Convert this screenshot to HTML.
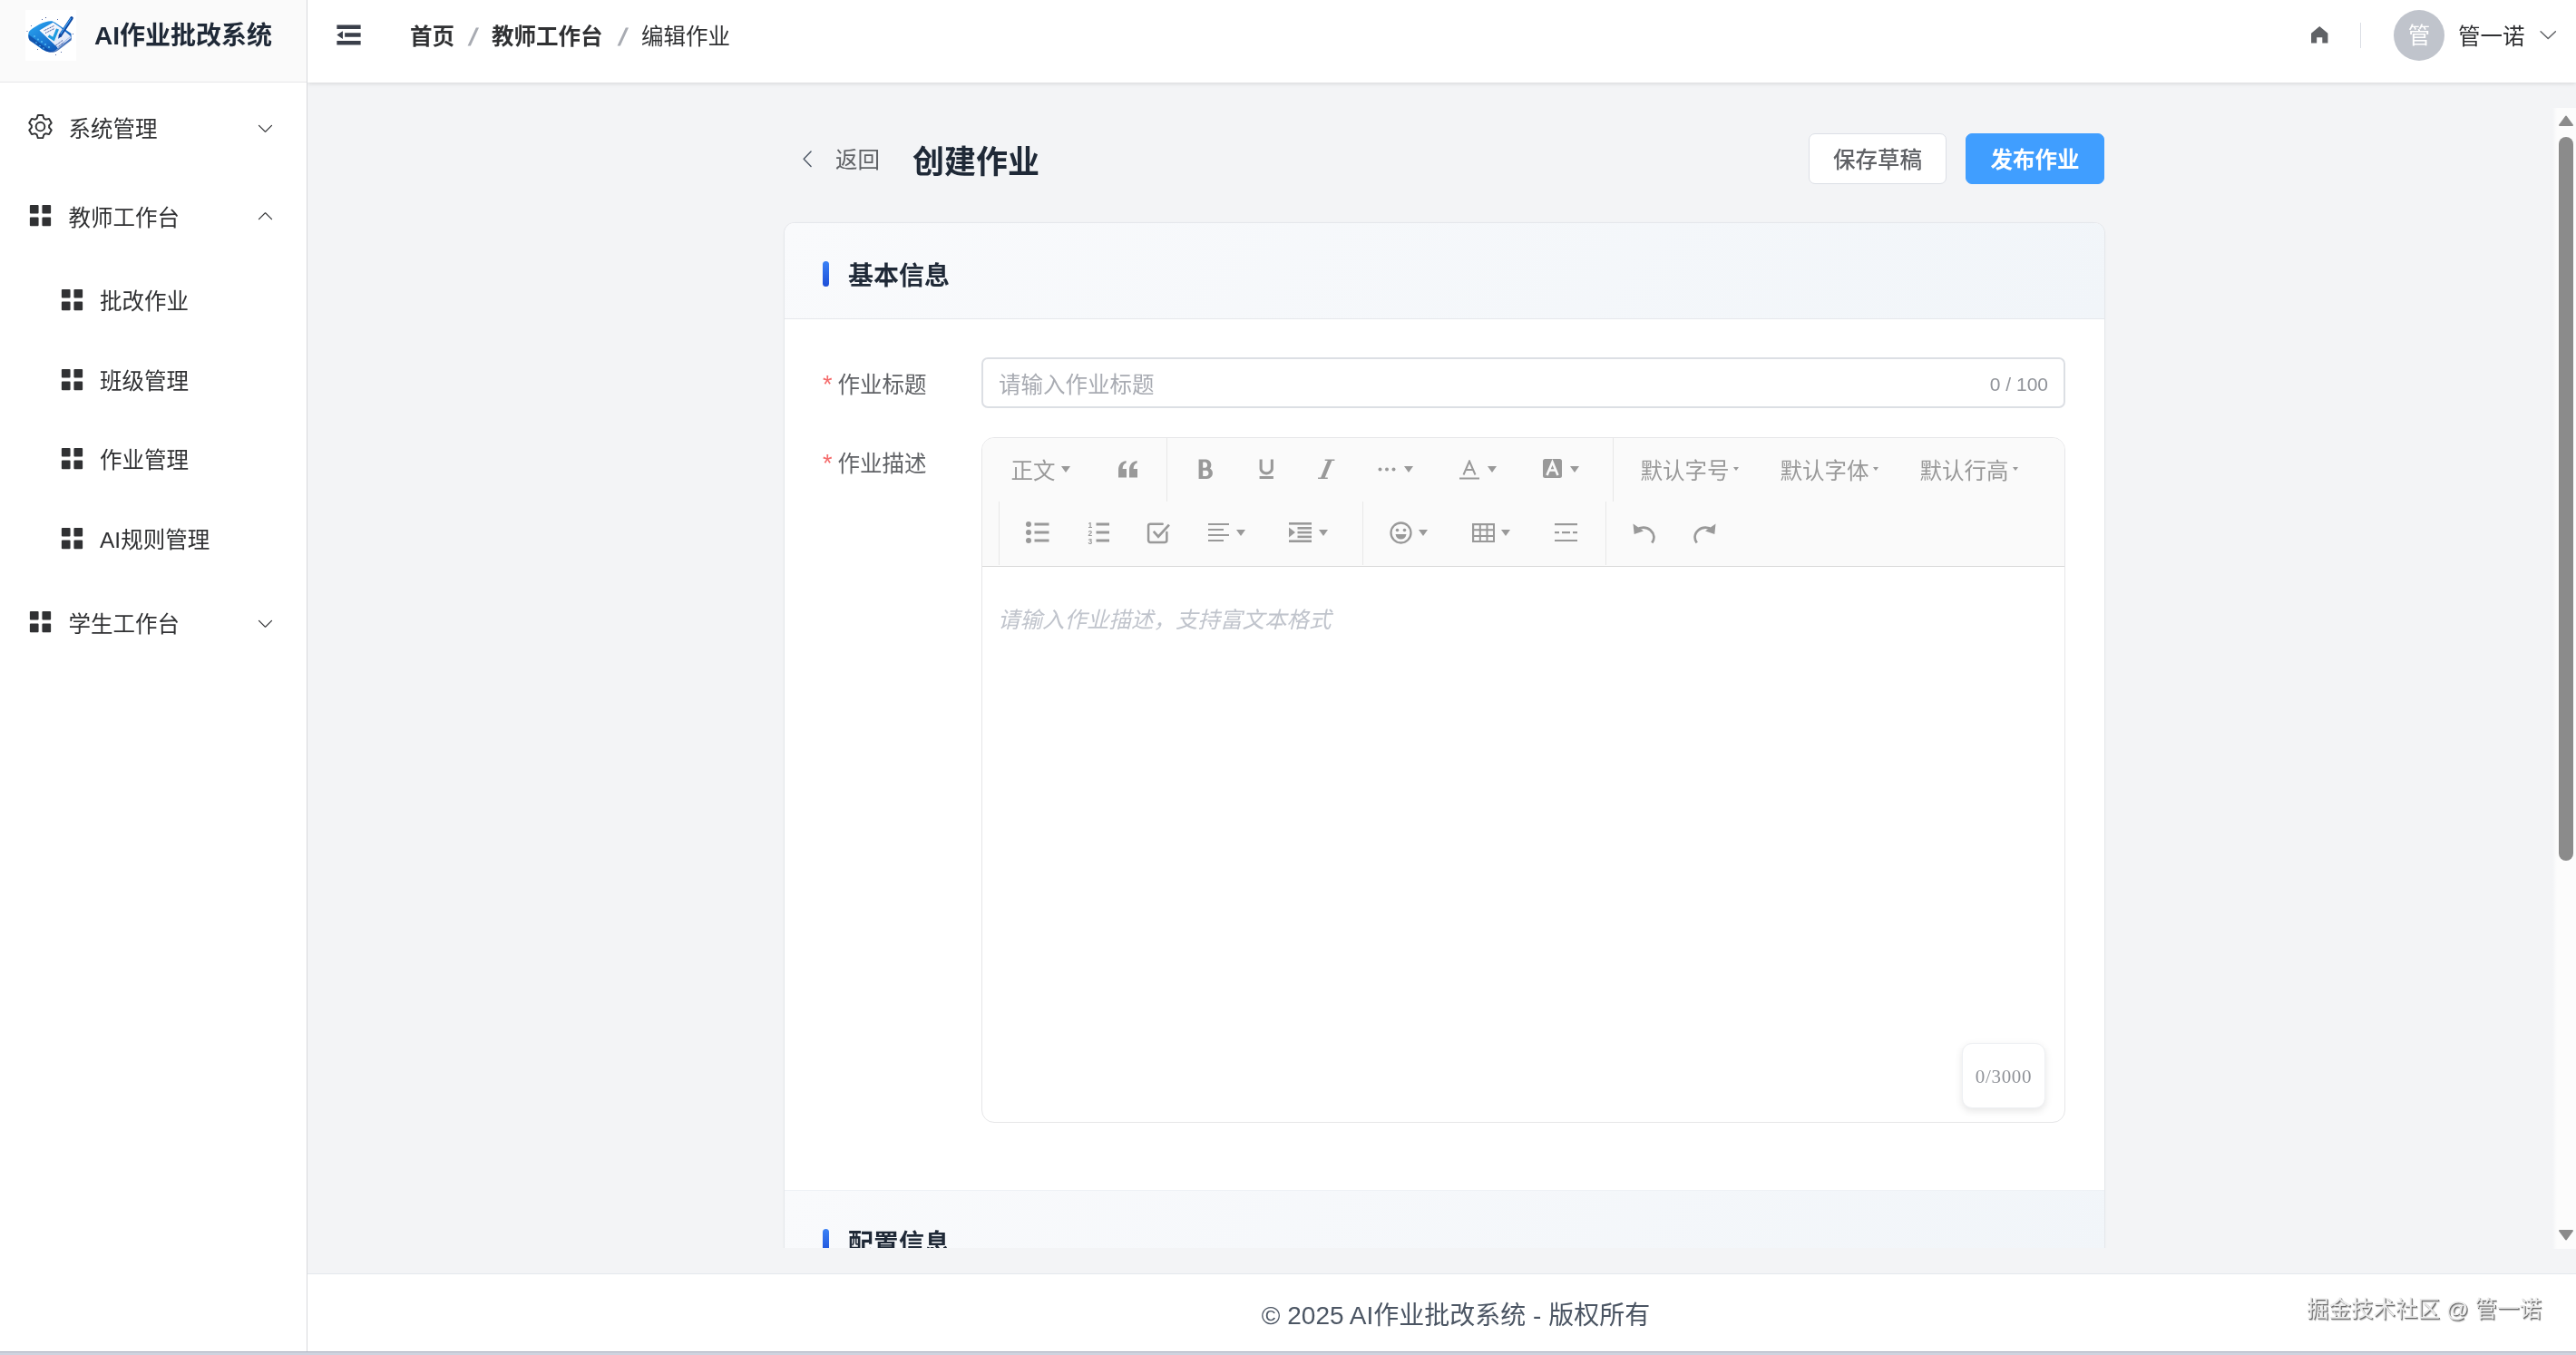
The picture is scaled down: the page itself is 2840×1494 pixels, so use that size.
<!DOCTYPE html>
<html lang="zh-CN">
<head>
<meta charset="utf-8">
<title>AI作业批改系统 - 编辑作业</title>
<style>
*{box-sizing:border-box;margin:0;padding:0}
html,body{width:2840px;height:1494px;overflow:hidden;background:#fff}
body{position:relative;will-change:transform;font-family:"Liberation Sans","Noto Sans CJK SC",sans-serif;font-size:24.5px;color:#303133;-webkit-font-smoothing:antialiased}
.abs{position:absolute}
svg{display:block}
/* sidebar */
#side{position:absolute;z-index:3;left:0;top:0;width:339px;height:1490px;background:#fff;border-right:1px solid #d8d9dc}
#brand{position:absolute;left:0;top:0;width:338px;height:91px;background:#fafafa;border-bottom:1px solid #e6e6e8}
#logo{position:absolute;left:28px;top:11px;width:56px;height:56px;background:#fff}
#brand .t{position:absolute;left:104px;top:20px;line-height:40px;font-size:28px;font-weight:700;color:#1f2937;white-space:nowrap}
.mi{position:absolute;left:0;width:338px;height:98px;color:#303133}
.mi .ic{position:absolute;left:29px;top:50%;width:31px;height:31px;margin-top:-16px}
.mi .tx{position:absolute;left:75.500px;top:50%;line-height:40px;margin-top:-17.5px;font-size:24.5px;white-space:nowrap}
.mi .ar{position:absolute;left:282px;top:50%;width:21px;height:21px;margin-top:-9px}
.mi .ar.u{margin-top:-10px}
.mi.sub{height:87.5px}
.mi.sub .ic{left:64px}
.mi.sub .tx{left:110px}
/* header */
#head{position:absolute;left:339px;top:0;width:2501px;height:91px;background:#fff;box-shadow:0 1px 5px rgba(0,0,0,.13)}
.bc{position:absolute;top:20.5px;line-height:40px;font-size:24.5px;white-space:nowrap}
.bc.b{font-weight:700;color:#303133}
.bc.s{color:#a8abb2;font-weight:700;font-size:27px;transform:skewX(-15deg)}
/* main */
#main{position:absolute;left:339px;top:90px;width:2501px;height:1314px;background:#f3f4f6}
#foot{position:absolute;left:339px;top:1404px;width:2501px;height:86px;background:#fff;border-top:1px solid #e4e7ed}
#strip{position:absolute;left:0;top:1490px;width:2840px;height:4px;background:#cfd3df;border-top:1px solid #a9aebd}

#fold{position:absolute;left:28px;top:21px;width:35px;height:35px;color:#3a3f4a}
#home{position:absolute;left:2206px;top:26px;width:24.5px;height:24.5px;color:#606266}
#hdiv{position:absolute;left:2263px;top:25px;width:1px;height:28px;background:#dcdfe6}
#ava{position:absolute;left:2300px;top:11px;width:56px;height:56px;border-radius:50%;background:#c0c4cc;color:#fff;text-align:center;line-height:58px;font-size:24.5px}
#uname{position:absolute;left:2371px;top:20.5px;line-height:40px;font-size:24.5px;color:#303133;white-space:nowrap}
#uarr{position:absolute;left:2458px;top:26px;width:24.5px;height:24.5px;color:#606266}
/* page */
#back{position:absolute;left:880px;top:157px;line-height:40px;color:#606266;font-size:24.5px;white-space:nowrap}
#backi{position:absolute;left:879px;top:163.2px;width:24.5px;height:24.5px;color:#4b5563}
#ptitle{position:absolute;left:1006px;top:153.5px;line-height:50px;font-size:35px;font-weight:700;color:#1f2937;white-space:nowrap}
.btn{position:absolute;top:147px;height:56px;border-radius:7px;font-size:24.5px;line-height:58px;text-align:center;white-space:nowrap}
#bsave{left:1994px;width:152px;background:#fff;border:1px solid #dcdfe6;color:#606266;font-weight:500}
#bpub{left:2167px;width:153px;background:#409eff;border:1px solid #409eff;color:#fff;font-weight:700}
#clip{position:absolute;left:339px;top:119px;width:2475px;height:1257px;overflow:hidden}
#card{position:absolute;left:526px;top:127px;width:1455px;height:1400px;background:#fff;border-radius:11px;box-shadow:0 0 0 1px #e5e7eb,0 1px 4px rgba(0,0,0,.03);overflow:hidden}
.sh{position:absolute;left:0;width:1455px;height:106px;background:linear-gradient(135deg,#f9fafc 0%,#f1f5f9 100%);border-bottom:1px solid #e5e7eb}
.sh .bar{position:absolute;left:42px;top:42px;width:7px;height:28px;border-radius:4px;background:linear-gradient(180deg,#3b82f6,#1d4ed8)}
.sh .tt{position:absolute;left:70px;top:39px;line-height:40px;font-size:28px;font-weight:700;color:#1f2937;white-space:nowrap}
.lab{position:absolute;left:42px;line-height:40px;font-size:24.5px;color:#606266;white-space:nowrap}
.lab i{font-style:normal;color:#f56c6c;margin-right:6px;font-size:27px;position:relative;top:0px;line-height:30px}
#inp{position:absolute;left:217px;top:148px;width:1195px;height:56px;border:2px solid #dcdfe4;border-radius:7px;background:#fff}
#inp .ph{position:absolute;left:17px;top:8.5px;line-height:40px;color:#a8abb2;font-size:24.5px;white-space:nowrap}
#inp .ct{position:absolute;right:17px;top:8px;line-height:40px;color:#909399;font-size:21px;white-space:nowrap}
#ed{position:absolute;left:217px;top:236px;width:1195px;height:756px;border:1px solid #e6e6e8;border-radius:14px;background:#fff;overflow:hidden}
#tb{position:absolute;left:0;top:0;width:1193px;height:142px;background:#fafafa;border-bottom:1px solid #d9d9d9;color:#999}
.tdv{position:absolute;width:1px;height:70px;background:#e8e8e8}
.ti{position:absolute;width:25px;height:25px}
.tt2{position:absolute;line-height:40px;font-size:24.5px;color:#999;white-space:nowrap}
.ca{position:absolute;width:0;height:0;border-left:5px solid transparent;border-right:5px solid transparent;border-top:7px solid #999}
.ca.s{border-left-width:3px;border-right-width:3px;border-top-width:4px}
#edph{position:absolute;left:17px;top:181px;line-height:40px;font-size:24.5px;font-style:italic;color:#c0c4cc;white-space:nowrap}
#cnt{position:absolute;left:1080px;top:667px;width:92px;height:72px;border-radius:11px;background:#fff;border:1px solid #eef0f3;box-shadow:0 3px 9px rgba(0,0,0,.10);text-align:center;line-height:72px;font-family:"Liberation Serif","Noto Serif CJK SC",serif;font-size:21px;letter-spacing:.7px;color:#909399}
/* scrollbar */
#sb{position:absolute;left:2814px;top:119px;width:26px;height:1258px;background:linear-gradient(90deg,rgba(252,252,252,0) 0,#fcfcfc 5px)}
#sb .up{position:absolute;left:6px;top:7px}
#sb .dn{position:absolute;left:6px;top:1236px}
#sb .th{position:absolute;left:7px;top:32px;width:16px;height:798px;border-radius:8px;background:#8b8b8b}
#ftx{position:absolute;left:0;top:23.5px;width:2532px;text-align:center;line-height:44px;font-size:28px;color:#4b5563;white-space:nowrap}
#wm{position:absolute;left:2543px;top:1424px;line-height:40px;font-size:24.5px;color:#ebebeb;white-space:nowrap;text-shadow:1px 1px 0 #6a6a6a,1.5px 1.5px 1px rgba(0,0,0,.3)}
</style>
</head>
<body>
<div id="main"></div>
<div id="clip">
  <div id="card">
    <div class="sh" style="top:0"><div class="bar"></div><div class="tt">基本信息</div></div>
    <div class="lab" style="top:158.5px"><i>*</i>作业标题</div>
    <div id="inp"><div class="ph">请输入作业标题</div><div class="ct">0 / 100</div></div>
    <div class="lab" style="top:246px"><i>*</i>作业描述</div>
    <div id="ed">
      <div id="tb">
<div class="tt2" style="left:31.5px;top:16.5px">正文</div>
<div class="ca" style="left:87.0px;top:30.5px"></div>
<svg class="abs" style="left:148.8px;top:23.0px" width="23" height="22" viewBox="0 0 23 22" ><path fill="#999" d="M1 12.5C1 6.5 4 2.8 9.6 2v2.6C7 5.4 5.8 7.6 5.6 11H10v9.5H1zM13 12.5C13 6.5 16 2.8 21.6 2v2.6C19 5.4 17.8 7.6 17.6 11H22v9.5h-9z"/></svg>
<div class="tdv" style="left:203.0px;top:0.0px"></div>
<svg class="abs" style="left:233.8px;top:22.4px" width="24.5" height="24.5" viewBox="0 0 1024 1024" ><path fill="#999" d="M707.872 484.64A254.88 254.88 0 0 0 768 320c0-141.152-114.848-256-256-256H192v896h384c141.152 0 256-114.848 256-256a256.096 256.096 0 0 0-124.128-219.36zM384 192h101.504c55.968 0 101.504 57.408 101.504 128s-45.536 128-101.504 128H384V192z m159.008 640H384v-256h159.008c58.464 0 106.016 57.408 106.016 128s-47.552 128-106.016 128z"/></svg>
<svg class="abs" style="left:300.8px;top:22.4px" width="24.5" height="24.5" viewBox="0 0 1024 1024" ><path fill="#999" d="M704 64l128 0 0 416c0 159.072-143.264 288-320 288s-320-128.928-320-288l0-416 128 0 0 416c0 40.16 18.24 78.688 51.36 108.512 36.896 33.216 86.848 51.488 140.64 51.488s103.744-18.304 140.64-51.488c33.12-29.792 51.36-68.352 51.36-108.512l0-416zM192 832l640 0 0 128-640 0z"/></svg>
<svg class="abs" style="left:366.8px;top:22.4px" width="24.5" height="24.5" viewBox="0 0 1024 1024" ><path fill="#999" d="M896 64v64h-128L448 896h128v64H128v-64h128L576 128h-128V64z"/></svg>
<svg class="abs" style="left:435.5px;top:32.0px" width="20" height="5" viewBox="0 0 20 5" ><circle cx="2.5" cy="2.5" r="2" fill="#999"/><circle cx="10" cy="2.5" r="2" fill="#999"/><circle cx="17.5" cy="2.5" r="2" fill="#999"/></svg>
<div class="ca" style="left:465.0px;top:30.5px"></div>
<svg class="abs" style="left:526.0px;top:23.5px" width="22" height="22" viewBox="0 0 22 22" ><path fill="none" stroke="#999" stroke-width="2" d="M4.5 16.5L11 1.5l6.5 15M7 11h8M0 20.5h22"/></svg>
<div class="ca" style="left:556.5px;top:30.5px"></div>
<svg class="abs" style="left:617.8px;top:23.3px" width="21" height="21" viewBox="0 0 21 21" ><rect x="0" y="0" width="21" height="21" rx="2.5" fill="#999"/><path fill="none" stroke="#fafafa" stroke-width="2.6" d="M4.5 18L10.5 3.5l6 14.5M6.8 12.5h7.4"/></svg>
<div class="ca" style="left:647.5px;top:30.5px"></div>
<div class="tdv" style="left:694.5px;top:0.0px"></div>
<div class="tt2" style="left:725.5px;top:16.5px">默认字号</div>
<div class="ca s" style="left:828.0px;top:31.5px"></div>
<div class="tt2" style="left:879.5px;top:16.5px">默认字体</div>
<div class="ca s" style="left:982.0px;top:31.5px"></div>
<div class="tt2" style="left:1033.5px;top:16.5px">默认行高</div>
<div class="ca s" style="left:1136.0px;top:31.5px"></div>
<div class="tdv" style="left:17.5px;top:70.0px"></div>
<svg class="abs" style="left:48.0px;top:92.3px" width="25.5" height="24" viewBox="0 0 25.5 24" ><circle cx="3" cy="3" r="3" fill="#999"/><rect x="9.5" y="1.5" width="16" height="3" fill="#999"/><circle cx="3" cy="12" r="3" fill="#999"/><rect x="9.5" y="10.5" width="16" height="3" fill="#999"/><circle cx="3" cy="21" r="3" fill="#999"/><rect x="9.5" y="19.5" width="16" height="3" fill="#999"/></svg>
<svg class="abs" style="left:115.8px;top:92.3px" width="24.5" height="25" viewBox="0 0 24.5 25" ><rect x="9.5" y="1.5" width="15" height="3" fill="#999"/><rect x="9.5" y="10.5" width="15" height="3" fill="#999"/><rect x="9.5" y="19.5" width="15" height="3" fill="#999"/><g font-family="Liberation Sans,sans-serif" font-size="8.5" font-weight="700" fill="#999"><text x="0.5" y="6.5">1</text><text x="0.5" y="15.5">2</text><text x="0.5" y="24.5">3</text></g></svg>
<svg class="abs" style="left:181.0px;top:90.6px" width="26.5" height="26" viewBox="0 0 25.5 25" ><path fill="none" stroke="#999" stroke-width="2.4" stroke-linejoin="round" stroke-linecap="round" d="M21.5 12.5V21a2 2 0 0 1-2 2H4a2 2 0 0 1-2-2V5.5a2 2 0 0 1 2-2h13"/><path fill="none" stroke="#999" stroke-width="2.6" d="M7.5 11.5l5 5.5L24 4.5"/></svg>
<svg class="abs" style="left:248.7px;top:94.0px" width="23" height="20" viewBox="0 0 23 20" ><rect x="0" y="0" width="23" height="2" fill="#999"/><rect x="0" y="6" width="17" height="2" fill="#999"/><rect x="0" y="12" width="23" height="2" fill="#999"/><rect x="0" y="18" width="17" height="2" fill="#999"/></svg>
<div class="ca" style="left:280.0px;top:101.0px"></div>
<svg class="abs" style="left:338.3px;top:93.0px" width="25" height="22" viewBox="0 0 25 22" ><rect x="0" y="0" width="25" height="2.6" fill="#999"/><rect x="9.5" y="5" width="15.5" height="2.6" fill="#999"/><rect x="9.5" y="9.8" width="15.5" height="2.6" fill="#999"/><rect x="9.5" y="14.6" width="15.5" height="2.6" fill="#999"/><rect x="0" y="19.4" width="25" height="2.6" fill="#999"/><path fill="#999" d="M0 5.5l7 5.5-7 5.5z"/></svg>
<div class="ca" style="left:371.0px;top:101.0px"></div>
<div class="tdv" style="left:418.5px;top:70.0px"></div>
<svg class="abs" style="left:448.8px;top:91.5px" width="25" height="25" viewBox="0 0 25 25" ><circle cx="12.5" cy="12.5" r="11" fill="none" stroke="#999" stroke-width="2.3"/><circle cx="8.5" cy="9.5" r="1.8" fill="#999"/><circle cx="16.5" cy="9.5" r="1.8" fill="#999"/><path fill="#999" d="M6.5 14h12c-.6 3.6-3 5.6-6 5.6s-5.400-2-6-5.600z"/></svg>
<div class="ca" style="left:481.0px;top:101.0px"></div>
<svg class="abs" style="left:539.6px;top:93.7px" width="25.2" height="21.2" viewBox="0 0 25.2 21.2" ><rect x="1.1" y="1.1" width="23" height="19" fill="none" stroke="#999" stroke-width="2.2"/><path stroke="#999" stroke-width="2" fill="none" d="M1 7.300h23M1 14h23M8.800 1v19M16.500 1v19"/></svg>
<div class="ca" style="left:572.0px;top:101.0px"></div>
<svg class="abs" style="left:630.8px;top:93.9px" width="25" height="20.2" viewBox="0 0 25 20.2" ><rect x="0" y="0" width="25" height="2.2" fill="#999"/><rect x="0" y="18" width="25" height="2.2" fill="#999"/><rect x="0" y="9" width="5" height="2.200" fill="#999"/><rect x="8" y="9" width="9" height="2.2" fill="#999"/><rect x="20" y="9" width="5" height="2.2" fill="#999"/></svg>
<div class="tdv" style="left:686.5px;top:70.0px"></div>
<svg class="abs" style="left:716.5px;top:92.5px" width="25" height="24" viewBox="0 0 25 24" ><path fill="none" stroke="#999" stroke-width="2.8" d="M4 8.500C8.500 4.800 15 4.500 19.500 8.500s5 9.500 1.800 14"/><path fill="#999" d="M0.500 1.500l1.200 11.500 10.300-3.500z"/></svg>
<svg class="abs" style="left:783.5px;top:92.5px" width="25" height="24" viewBox="0 0 25 24" ><g transform="translate(25,0) scale(-1,1)"><path fill="none" stroke="#999" stroke-width="2.8" d="M4 8.500C8.500 4.800 15 4.500 19.500 8.500s5 9.500 1.800 14"/><path fill="#999" d="M0.500 1.500l1.200 11.500 10.300-3.500z"/></g></svg>
</div><!--/TB-->
      <div id="edph">请输入作业描述，支持富文本格式</div>
      <div id="cnt">0/3000</div>
    </div>
    <div class="sh" style="top:1066px;border-top:1px solid #eef1f5"><div class="bar"></div><div class="tt">配置信息</div></div>
  </div>
</div>
<div id="backi"><svg viewBox="0 0 1024 1024" width="100%" height="100%"><path fill="currentColor" d="M609.408 149.376 277.76 489.6a32 32 0 0 0 0 44.672l331.648 340.352a29.12 29.12 0 0 0 41.728 0 30.592 30.592 0 0 0 0-42.752L339.264 511.936l311.872-319.872a30.592 30.592 0 0 0 0-42.688 29.12 29.12 0 0 0-41.728 0z"/></svg></div>
<div id="back" style="left:921px">返回</div>
<div id="ptitle">创建作业</div>
<div class="btn" id="bsave">保存草稿</div>
<div class="btn" id="bpub">发布作业</div>
<div id="sb"><svg class="up" width="18" height="14" viewBox="0 0 18 14"><path d="M9 2.500L16 12H2z" fill="#8b8b8b" stroke="#8b8b8b" stroke-width="2" stroke-linejoin="round"/></svg><div class="th"></div><svg class="dn" width="18" height="14" viewBox="0 0 18 14"><path d="M9 11.500L16 2H2z" fill="#8b8b8b" stroke="#8b8b8b" stroke-width="2" stroke-linejoin="round"/></svg></div>
<div id="side">
  <div id="brand">
    <div id="logo"><svg width="56" height="56" viewBox="8 7 56 56">
<defs><linearGradient id="lg1" x1="0" y1="0" x2="1" y2="1"><stop offset="0" stop-color="#2aa8f2"/><stop offset=".55" stop-color="#1976d2"/><stop offset="1" stop-color="#0b3fa0"/></linearGradient>
<linearGradient id="lg2" x1="0" y1="0" x2="1" y2="1"><stop offset="0" stop-color="#ffffff"/><stop offset="1" stop-color="#d9e2f7"/></linearGradient></defs>
<path fill="url(#lg1)" d="M11.5 32.500C12 30 15 27.500 23.500 22.800C29 20 34 18.800 37.500 19.300L41 21 58.500 33 58.700 38.500 43.500 50 C39 53.500 34.500 54 30.500 52.500L26.500 50.500 13 40.500C11.200 38.500 11 35 11.500 32.500z"/>
<path fill="#0d47a1" d="M11.500 34l22 16.500c3 2 6 2 9 .5L58.700 38v2.200L44 51.500c-4 3-9 3-13 .8L13 41c-1.500-1.500-1.800-4-1.500-7z" opacity=".75"/>
<path fill="url(#lg2)" d="M23.500 29.500L38.500 20.800l8 5.500 11.500 9.700L43 48z"/>
<path fill="#cfd9f3" d="M43 48L58 36l.3 2L43.500 49.500z"/>
<path fill="none" stroke="#1e3a8a" stroke-width=".9" stroke-dasharray="1.200 .6" d="M28.500 29.800l11.500-5.600M30 32.500l10-5M49 40.500l-8 6M50.500 43l-6 4.500"/>
<path fill="none" stroke="#1e9be0" stroke-width="3.200" stroke-linejoin="miter" d="M33.500 35.500l5.500 3.500 4.500-11"/>
<path fill="none" stroke="#0d47a1" stroke-width="3.600" stroke-linecap="round" d="M59 16L46.500 35"/>
<path fill="none" stroke="#42a5f5" stroke-width="1.300" stroke-linecap="round" d="M58 16.500L47 33"/>
<path fill="#0b3fa0" d="M45 34.500l2.800 1.800-3.800 2.500z"/>
<g fill="#5bc4f5"><circle cx="18" cy="36" r=".9"/><circle cx="22" cy="39.500" r=".9"/><circle cx="26" cy="42" r=".9"/><circle cx="30" cy="45" r=".9"/><circle cx="34" cy="48" r=".9"/><circle cx="20" cy="43" r=".8"/><circle cx="24" cy="46.500" r=".8"/><circle cx="28" cy="49" r=".8"/></g>
<g fill="#1e3a8a"><circle cx="30.500" cy="15.500" r=".6"/><circle cx="26.500" cy="17.500" r=".5"/><circle cx="43.500" cy="17.500" r=".5"/><circle cx="14.500" cy="24.500" r=".5"/><circle cx="60.500" cy="33.500" r=".5"/><circle cx="21.500" cy="50.500" r=".5"/><circle cx="47.500" cy="53.500" r=".5"/><circle cx="41.500" cy="56.500" r=".5"/><circle cx="10" cy="30.500" r=".5"/></g>
</svg></div>
    <div class="t">AI作业批改系统</div>
  </div>
<div class="mi" style="top:91px"><div class="ic"><svg viewBox="0 0 1024 1024" width="100%" height="100%"><path fill="currentColor" d="M600.704 64a32 32 0 0 1 30.464 22.208l35.2 109.376c14.784 7.232 28.928 15.36 42.432 24.512l112.384-24.192a32 32 0 0 1 34.432 15.36L944.32 364.8a32 32 0 0 1-4.032 37.504l-77.12 85.12a357.12 357.12 0 0 1 0 49.024l77.12 85.248a32 32 0 0 1 4.032 37.504l-88.704 153.6a32 32 0 0 1-34.432 15.296L708.8 803.904c-13.44 9.088-27.648 17.28-42.368 24.512l-35.264 109.376A32 32 0 0 1 600.704 960H423.296a32 32 0 0 1-30.464-22.208L357.696 828.48a351.616 351.616 0 0 1-42.56-24.64l-112.32 24.256a32 32 0 0 1-34.432-15.36L79.68 659.2a32 32 0 0 1 4.032-37.504l77.12-85.248a357.12 357.12 0 0 1 0-48.896l-77.12-85.248A32 32 0 0 1 79.68 364.8l88.704-153.6a32 32 0 0 1 34.432-15.296l112.32 24.256c13.568-9.152 27.776-17.408 42.56-24.64l35.2-109.312A32 32 0 0 1 423.232 64H600.64zm-23.424 64H446.72l-36.352 113.088-24.512 11.968a294.113 294.113 0 0 0-34.816 20.096l-22.656 15.36-116.224-25.088-65.28 113.152 79.68 88.192-1.92 27.136a293.12 293.12 0 0 0 0 40.192l1.92 27.136-79.808 88.192 65.344 113.152 116.224-25.024 22.656 15.296a294.113 294.113 0 0 0 34.816 20.096l24.512 11.968L446.72 896h130.688l36.48-113.152 24.448-11.904a288.282 288.282 0 0 0 34.752-20.096l22.592-15.296 116.288 25.024 65.28-113.152-79.744-88.192 1.92-27.136a293.12 293.12 0 0 0 0-40.256l-1.92-27.136 79.808-88.128-65.344-113.152-116.288 24.96-22.592-15.232a287.616 287.616 0 0 0-34.752-20.096l-24.448-11.904L577.344 128zM512 320a192 192 0 1 1 0 384 192 192 0 0 1 0-384zm0 64a128 128 0 1 0 0 256 128 128 0 0 0 0-256z"/></svg></div><div class="tx">系统管理</div><div class="ar"><svg viewBox="0 0 1024 1024" width="100%" height="100%"><path fill="currentColor" d="M831.872 340.864 512 652.672 192.128 340.864a30.592 30.592 0 0 0-42.752 0 29.12 29.12 0 0 0 0 41.6L489.664 714.24a32 32 0 0 0 44.672 0l340.288-331.712a29.12 29.12 0 0 0 0-41.728 30.592 30.592 0 0 0-42.752 0z"/></svg></div></div>
<div class="mi" style="top:189px"><div class="ic"><svg viewBox="0 0 1024 1024" width="100%" height="100%"><path fill="currentColor" d="M160 448a32 32 0 0 1-32-32V160.064a32 32 0 0 1 32-32h256a32 32 0 0 1 32 32V416a32 32 0 0 1-32 32H160zm448 0a32 32 0 0 1-32-32V160.064a32 32 0 0 1 32-32h255.936a32 32 0 0 1 32 32V416a32 32 0 0 1-32 32H608zM160 896a32 32 0 0 1-32-32V608a32 32 0 0 1 32-32h256a32 32 0 0 1 32 32v256a32 32 0 0 1-32 32H160zm448 0a32 32 0 0 1-32-32V608a32 32 0 0 1 32-32h255.936a32 32 0 0 1 32 32v256a32 32 0 0 1-32 32H608z"/></svg></div><div class="tx">教师工作台</div><div class="ar u"><svg style="transform:rotate(180deg)" viewBox="0 0 1024 1024" width="100%" height="100%"><path fill="currentColor" d="M831.872 340.864 512 652.672 192.128 340.864a30.592 30.592 0 0 0-42.752 0 29.12 29.12 0 0 0 0 41.6L489.664 714.24a32 32 0 0 0 44.672 0l340.288-331.712a29.12 29.12 0 0 0 0-41.728 30.592 30.592 0 0 0-42.752 0z"/></svg></div></div>
<div class="mi sub" style="top:287px"><div class="ic"><svg viewBox="0 0 1024 1024" width="100%" height="100%"><path fill="currentColor" d="M160 448a32 32 0 0 1-32-32V160.064a32 32 0 0 1 32-32h256a32 32 0 0 1 32 32V416a32 32 0 0 1-32 32H160zm448 0a32 32 0 0 1-32-32V160.064a32 32 0 0 1 32-32h255.936a32 32 0 0 1 32 32V416a32 32 0 0 1-32 32H608zM160 896a32 32 0 0 1-32-32V608a32 32 0 0 1 32-32h256a32 32 0 0 1 32 32v256a32 32 0 0 1-32 32H160zm448 0a32 32 0 0 1-32-32V608a32 32 0 0 1 32-32h255.936a32 32 0 0 1 32 32v256a32 32 0 0 1-32 32H608z"/></svg></div><div class="tx">批改作业</div></div>
<div class="mi sub" style="top:375px"><div class="ic"><svg viewBox="0 0 1024 1024" width="100%" height="100%"><path fill="currentColor" d="M160 448a32 32 0 0 1-32-32V160.064a32 32 0 0 1 32-32h256a32 32 0 0 1 32 32V416a32 32 0 0 1-32 32H160zm448 0a32 32 0 0 1-32-32V160.064a32 32 0 0 1 32-32h255.936a32 32 0 0 1 32 32V416a32 32 0 0 1-32 32H608zM160 896a32 32 0 0 1-32-32V608a32 32 0 0 1 32-32h256a32 32 0 0 1 32 32v256a32 32 0 0 1-32 32H160zm448 0a32 32 0 0 1-32-32V608a32 32 0 0 1 32-32h255.936a32 32 0 0 1 32 32v256a32 32 0 0 1-32 32H608z"/></svg></div><div class="tx">班级管理</div></div>
<div class="mi sub" style="top:462px"><div class="ic"><svg viewBox="0 0 1024 1024" width="100%" height="100%"><path fill="currentColor" d="M160 448a32 32 0 0 1-32-32V160.064a32 32 0 0 1 32-32h256a32 32 0 0 1 32 32V416a32 32 0 0 1-32 32H160zm448 0a32 32 0 0 1-32-32V160.064a32 32 0 0 1 32-32h255.936a32 32 0 0 1 32 32V416a32 32 0 0 1-32 32H608zM160 896a32 32 0 0 1-32-32V608a32 32 0 0 1 32-32h256a32 32 0 0 1 32 32v256a32 32 0 0 1-32 32H160zm448 0a32 32 0 0 1-32-32V608a32 32 0 0 1 32-32h255.936a32 32 0 0 1 32 32v256a32 32 0 0 1-32 32H608z"/></svg></div><div class="tx">作业管理</div></div>
<div class="mi sub" style="top:550px"><div class="ic"><svg viewBox="0 0 1024 1024" width="100%" height="100%"><path fill="currentColor" d="M160 448a32 32 0 0 1-32-32V160.064a32 32 0 0 1 32-32h256a32 32 0 0 1 32 32V416a32 32 0 0 1-32 32H160zm448 0a32 32 0 0 1-32-32V160.064a32 32 0 0 1 32-32h255.936a32 32 0 0 1 32 32V416a32 32 0 0 1-32 32H608zM160 896a32 32 0 0 1-32-32V608a32 32 0 0 1 32-32h256a32 32 0 0 1 32 32v256a32 32 0 0 1-32 32H160zm448 0a32 32 0 0 1-32-32V608a32 32 0 0 1 32-32h255.936a32 32 0 0 1 32 32v256a32 32 0 0 1-32 32H608z"/></svg></div><div class="tx">AI规则管理</div></div>
<div class="mi" style="top:637px"><div class="ic"><svg viewBox="0 0 1024 1024" width="100%" height="100%"><path fill="currentColor" d="M160 448a32 32 0 0 1-32-32V160.064a32 32 0 0 1 32-32h256a32 32 0 0 1 32 32V416a32 32 0 0 1-32 32H160zm448 0a32 32 0 0 1-32-32V160.064a32 32 0 0 1 32-32h255.936a32 32 0 0 1 32 32V416a32 32 0 0 1-32 32H608zM160 896a32 32 0 0 1-32-32V608a32 32 0 0 1 32-32h256a32 32 0 0 1 32 32v256a32 32 0 0 1-32 32H160zm448 0a32 32 0 0 1-32-32V608a32 32 0 0 1 32-32h255.936a32 32 0 0 1 32 32v256a32 32 0 0 1-32 32H608z"/></svg></div><div class="tx">学生工作台</div><div class="ar"><svg viewBox="0 0 1024 1024" width="100%" height="100%"><path fill="currentColor" d="M831.872 340.864 512 652.672 192.128 340.864a30.592 30.592 0 0 0-42.752 0 29.12 29.12 0 0 0 0 41.6L489.664 714.24a32 32 0 0 0 44.672 0l340.288-331.712a29.12 29.12 0 0 0 0-41.728 30.592 30.592 0 0 0-42.752 0z"/></svg></div></div>
</div>
<div id="head">
  <div id="fold"><svg viewBox="0 0 1024 1024" width="100%" height="100%"><path fill="currentColor" d="M896 192H128v128h768V192zm0 256H384v128h512V448zm0 256H128v128h768V704zM320 384 128 512l192 128V384z"/></svg></div>
  <div class="bc b" style="left:113px">首页</div>
  <div class="bc s" style="left:179px">/</div>
  <div class="bc b" style="left:203px">教师工作台</div>
  <div class="bc s" style="left:344px">/</div>
  <div class="bc" style="left:368px">编辑作业</div>
  <div id="home"><svg viewBox="0 0 1024 1024" width="100%" height="100%"><path fill="currentColor" d="M512 128 128 447.936V896h255.936V640H640v256h255.936V447.936z"/></svg></div>
  <div id="hdiv"></div>
  <div id="ava">管</div>
  <div id="uname">管一诺</div>
  <div id="uarr"><svg viewBox="0 0 1024 1024" width="100%" height="100%"><path fill="currentColor" d="M831.872 340.864 512 652.672 192.128 340.864a30.592 30.592 0 0 0-42.752 0 29.12 29.12 0 0 0 0 41.6L489.664 714.24a32 32 0 0 0 44.672 0l340.288-331.712a29.12 29.12 0 0 0 0-41.728 30.592 30.592 0 0 0-42.752 0z"/></svg></div>
</div>
<div id="foot"><div id="ftx">© 2025 AI作业批改系统 - 版权所有</div></div>
<div id="wm">掘金技术社区 @ 管一诺</div>
<div id="strip"></div>
</body>
</html>
